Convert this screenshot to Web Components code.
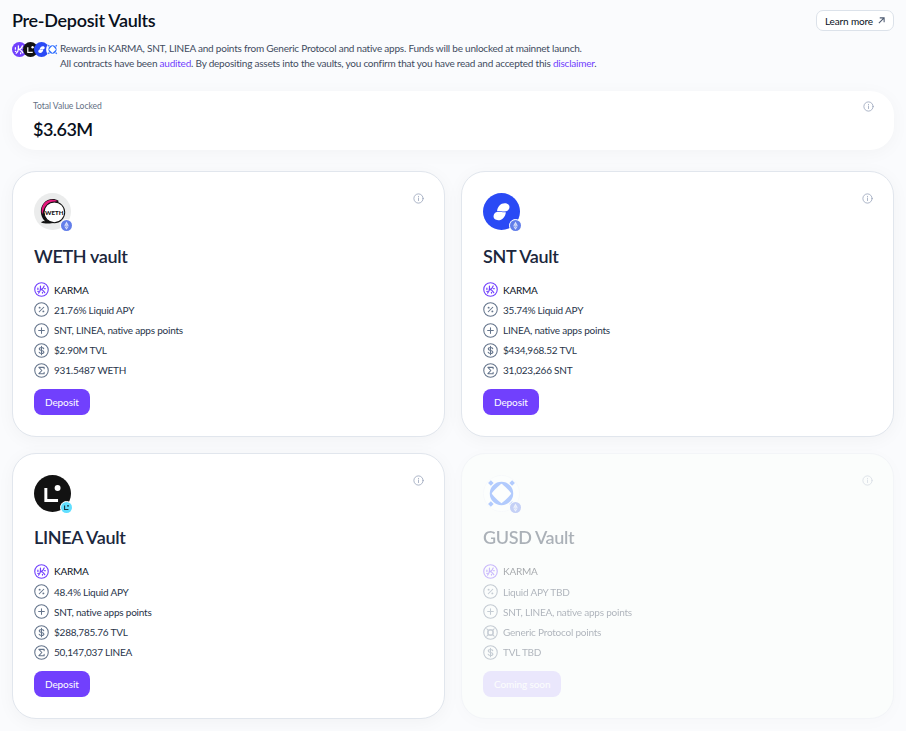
<!DOCTYPE html>
<html lang="en">
<head>
<meta charset="utf-8">
<title>Pre-Deposit Vaults</title>
<style>
    body {
        margin: 0;
        background: #fafbfd;
        color: #1b273d;
        font-family: Lato, "Liberation Sans", sans-serif;
        font-size: 10px;
        letter-spacing: -.22px;
    }
</style>
</head>
<body>
<vaults-page></vaults-page>

<script>
const ICONS = {
    karma: `<g stroke="#7140fd"><circle cx="10" cy="10" r="9" stroke-width="1.5"/><path d="M8.6 5.300v3.500c0 2.700-.9 4.500-2.400 5.900M5.200 8v1.900M13.600 5.300c-.6 2.500-1.900 4.100-4.600 4.700 2.900 0 3.900 1.600 5.400 4.300M14.200 8.900h.8M11.300 13.800v.9M5.100 12.400h.7" stroke-width="1.6"/></g>`,
    percent: `<circle cx="10" cy="10" r="9"/><path d="m7 13 6-6"/><circle cx="7.5" cy="7.5" r=".6"/><circle cx="12.5" cy="12.5" r=".6"/>`,
    plus: `<circle cx="10" cy="10" r="9"/><path d="M10 6.2v7.6M6.2 10h7.6"/>`,
    dollar: `<circle cx="10" cy="10" r="9"/><path d="M13 7.6c-.4-1-1.5-1.5-3-1.5-1.8 0-3 .7-3 1.9C7 11 13.2 9 13.2 12c0 1.2-1.3 2-3.2 2-1.7 0-2.9-.6-3.2-1.7M10 4.5v11"/>`,
    sigma: `<circle cx="10" cy="10" r="9"/><path d="M13.5 7.500V5.800h-7l4 4.200-4 4.200h7v-1.700"/>`,
    generic: `<circle cx="10" cy="10" r="9"/><circle cx="10" cy="10" r="3.6"/><path d="M6.7 6.7h6.6v6.6H6.700zM5 5l1.500 1.500M15 5l-1.500 1.500M5 15l1.500-1.500M15 15l-1.500-1.500"/>`,
    info: `<circle cx="10" cy="10" r="8.4"/><path d="M10 9.3v4.500M10 6.100v.8"/>`
};

const TOKENS = {
    karma: `<circle cx="20" cy="20" r="20" fill="#7140fd"/><g fill="none" stroke="#fff" stroke-width="3.2" stroke-linecap="round"><path d="M17 10v8c0 6-2 9-6 12M9 15v4M28 10c-1.500 5-4 9-10 10 6 0 8 3 11 9M30 17h1M23 29v2M9 25h1"/></g>`,
    linea: `<circle cx="20" cy="20" r="20" fill="#121212"/><path d="M12.8 14v13.500H26" fill="none" stroke="#fff" stroke-width="3.2"/><circle cx="25.5" cy="14" r="3.2" fill="#fff"/>`,
    snt: `<circle cx="20" cy="20" r="20" fill="#2a4af5"/><path fill="#fff" d="M15.2 19.700c.5-5 3.800-8.700 8.300-8.700 3 0 5.300 1.700 5.100 4.500-.2 3-2.700 4.700-5.900 4.600-3-.1-4.600-1-7.500-.4zM24.700 20.700c-.5 5-3.800 8.700-8.300 8.700-3 0-5.200-1.700-5-4.500.2-3 2.700-4.700 5.900-4.600 3 .1 4.500 1 7.400.4z"/>`,
    gusd: `<circle cx="20" cy="20" r="19.5" fill="#fff" stroke="#f1f4fa"/><path fill="#3270ff" fill-rule="evenodd" d="M20 7.300a12.700 12.700 0 1 1 0 25.400 12.700 12.700 0 0 1 0-25.400zM20 9.500c-2 1-9.500 8.500-10.500 10.500 1 2 8.500 9.500 10.500 10.500 2-1 9.500-8.500 10.500-10.500-1-2-8.500-9.500-10.500-10.500zM8.500 5.700l3 3-3 3-3-3zM31.500 5.700l3 3-3 3-3-3zM8.500 28.300l3 3-3 3-3-3zM31.500 28.300l3 3-3 3-3-3z"/>`,
    weth: `<circle cx="20" cy="20" r="20" fill="#ebecec"/><path d="M7.500 31.500c2-1.500 4-.5 4-1.500-5-5-5.500-14-1-19 4-4.500 11-6 16-2.500l-4 23c-4 2-11 2.200-15 0z" fill="#111"/><path d="M8.800 23C7 16 10.500 9 17 7.700c3-.7 6-.2 8.500 1L18 11l-7 6z" fill="#e5177b"/><circle cx="22" cy="20.9" r="11.2" fill="#fff" stroke="#111" stroke-width="1.1"/><text x="21.9" y="23.300" text-anchor="middle" font-family="Lato, sans-serif" font-weight="900" font-size="6.8" letter-spacing="0" textLength="20" lengthAdjust="spacingAndGlyphs" fill="#111">WETH</text>`,
    eth: `<circle cx="20" cy="20" r="20" fill="#627eea"/><path d="M20 5v11.500l8.500 4zM20 5l-8.500 15.500 8.500-4zM20 27.500V35l8.500-12.500zM20 35v-7.500l-8.500-5z" fill="#fff" fill-opacity=".75"/><path d="m20 25.500 8.500-5-8.500-4-8.500 4z" fill="#fff" fill-opacity=".6"/>`,
    lineaNet: `<circle cx="20" cy="20" r="20" fill="#61dfff"/><path d="M13 13v14h14" fill="none" stroke="#17343f" stroke-width="4"/><circle cx="25.5" cy="14" r="3.5" fill="#17343f"/>`
};

const VAULTS = [
    {
        name: 'WETH vault', token: 'weth', network: 'eth',
        items: [['karma', 'KARMA'], ['percent', '21.76% Liquid APY'], ['plus', 'SNT, LINEA, native apps points'], ['dollar', '$2.90M TVL'], ['sigma', '931.5487 WETH']]
    },
    {
        name: 'SNT Vault', token: 'snt', network: 'eth',
        items: [['karma', 'KARMA'], ['percent', '35.74% Liquid APY'], ['plus', 'LINEA, native apps points'], ['dollar', '$434,968.52 TVL'], ['sigma', '31,023,266 SNT']]
    },
    {
        name: 'LINEA Vault', token: 'linea', network: 'lineaNet',
        items: [['karma', 'KARMA'], ['percent', '48.4% Liquid APY'], ['plus', 'SNT, native apps points'], ['dollar', '$288,785.76 TVL'], ['sigma', '50,147,037 LINEA']]
    },
    {
        name: 'GUSD Vault', token: 'gusd', network: 'eth', soon: true,
        items: [['karma', 'KARMA'], ['percent', 'Liquid APY TBD'], ['plus', 'SNT, LINEA, native apps points'], ['generic', 'Generic Protocol points'], ['dollar', 'TVL TBD']]
    }
];

class UiIcon extends HTMLElement {
    connectedCallback() {
        this.attachShadow({mode: 'open'}).innerHTML = `
            <style>
                :host { display: block; flex: none; width: 15px; height: 15px; color: #64748b; }
                svg { display: block; width: 100%; height: 100%; }
            </style>
            <svg viewBox="0 0 20 20" fill="none" stroke="currentColor" stroke-width="1.4" stroke-linecap="round" stroke-linejoin="round">${ICONS[this.getAttribute('name')]}</svg>
        `;
    }
}

class TokenLogo extends HTMLElement {
    connectedCallback() {
        this.attachShadow({mode: 'open'}).innerHTML = `
            <style>
                :host { display: block; flex: none; width: 37px; height: 37px; }
                svg { display: block; width: 100%; height: 100%; }
            </style>
            <svg viewBox="0 0 40 40">${TOKENS[this.getAttribute('name')]}</svg>
        `;
    }
}

class TotalValue extends HTMLElement {
    connectedCallback() {
        this.attachShadow({mode: 'open'}).innerHTML = `
            <style>
                :host {
                    display: flex;
                    justify-content: space-between;
                    box-sizing: border-box;
                    height: 59px;
                    padding: 9px 20.5px 0 21px;
                    border-radius: 24px;
                    background: #fff;
                    box-shadow: 0 3px 18px rgba(9, 16, 28, .035);
                }
                .label { font-size: 8.6px; line-height: 12px; letter-spacing: -.05px; color: #647084; }
                .value { margin-top: 6px; font-size: 18px; line-height: 22px; font-weight: 600; letter-spacing: -.55px; color: #09101c; }
                ui-icon { width: 11px; height: 11px; margin-top: 1px; color: #94a0b8; }
            </style>
            <div>
                <div class="label"><slot name="label"></slot></div>
                <div class="value"><slot></slot></div>
            </div>
            <ui-icon name="info"></ui-icon>
        `;
    }
}

class VaultCard extends HTMLElement {
    set vault(vault) {
        this._vault = vault;
        this.render();
    }

    render() {
        const {name, token, network, soon, items} = this._vault;
        const root = this.shadowRoot || this.attachShadow({mode: 'open'});
        this.toggleAttribute('soon', Boolean(soon));

        root.innerHTML = `
            <style>
                :host {
                    display: block;
                    box-sizing: border-box;
                    height: 265.8px;
                    padding: 21px;
                    border: 1px solid #e1e6ed;
                    border-radius: 24px;
                    background: #fff;
                    box-shadow: 0 3px 18px rgba(9, 16, 28, .04);
                }
                :host([soon]) { background: #fbfdfc; border-color: #f3f5f8; box-shadow: 0 3px 18px rgba(9, 16, 28, .02); }
                :host([soon]) .content { opacity: .36; }
                .top { display: flex; justify-content: space-between; }
                .logo { position: relative; }
                .badge {
                    position: absolute;
                    right: -2px;
                    bottom: -2px;
                    width: 11px;
                    height: 11px;
                    border: 1px solid #fff;
                    border-radius: 50%;
                    background: #fff;
                }
                .info { width: 11px; height: 11px; margin-right: -.6px; color: #94a0b8; }
                h2 {
                    margin: 14.6px 0 12px;
                    font-size: 18px;
                    line-height: 23px;
                    font-weight: 600;
                    letter-spacing: -.36px;
                }
                ul { margin: 0; padding: 0; list-style: none; }
                li { display: flex; align-items: center; gap: 5px; height: 20.2px; color: #28344a; }
                li:first-child { color: #09101c; }
                button {
                    display: block;
                    height: 26px;
                    margin: 8.3px 0 0;
                    padding: 0 11px;
                    border: 0;
                    border-radius: 8px;
                    background: #7140fd;
                    color: #fff;
                    font: inherit;
                    letter-spacing: -.1px;
                }
                :host([soon]) .content button { opacity: .32; }
            </style>
            <div class="content">
                <div class="top">
                    <div class="logo">
                        <token-logo name="${token}"></token-logo>
                        <token-logo class="badge" name="${network}"></token-logo>
                    </div>
                    <ui-icon class="info" name="info"></ui-icon>
                </div>
                <h2>${name}</h2>
                <ul>${items.map(([icon, text]) => `<li><ui-icon name="${icon}"></ui-icon><span>${text}</span></li>`).join('')}</ul>
                <button type="button">${soon ? 'Coming soon' : 'Deposit'}</button>
            </div>
        `;
    }
}

class VaultsPage extends HTMLElement {
    connectedCallback() {
        const root = this.attachShadow({mode: 'open'});
        root.innerHTML = `
            <style>
                :host { display: block; box-sizing: border-box; height: 731px; padding: 10px 12px 0; overflow: hidden; }
                header { display: flex; justify-content: space-between; align-items: flex-start; height: 31px; }
                h1 { margin: 0; font-size: 18px; line-height: 20px; font-weight: 600; letter-spacing: -.29px; color: #09101c; }
                .learn {
                    display: flex;
                    align-items: center;
                    gap: 5.4px;
                    box-sizing: border-box;
                    height: 21px;
                    padding: 0 7.6px 0 8px;
                    border: 1px solid #dce2ea;
                    border-radius: 7px;
                    background: #fff;
                    color: #09101c;
                    letter-spacing: -.13px;
                }
                .learn svg { width: 7px; height: 7px; margin-bottom: 1px; }
                .intro { display: flex; height: 50px; }
                .tokens { display: flex; width: 48px; padding-top: 1px; }
                .tokens token-logo { width: 15px; height: 15px; margin-right: -4px; }
                .tokens token-logo:last-child { margin-left: 1px; width: 13px; height: 13px; margin-top: 1px; }
                p { margin: 0; line-height: 15px; color: #3f4b60; }
                a { color: #7140fd; text-decoration: none; }
                .grid { display: grid; grid-template-columns: 1fr 1fr; gap: 16px; margin-top: 21px; }
            </style>
            <header>
                <h1>Pre-Deposit Vaults</h1>
                <a class="learn" href="#"><span>Learn more</span>
                    <svg viewBox="0 0 8 8" fill="none" stroke="#4d5a70" stroke-width="1.2"><path d="m1 7 6-6M2 1h5v5"/></svg>
                </a>
            </header>
            <div class="intro">
                <div class="tokens">
                    <token-logo name="karma"></token-logo>
                    <token-logo name="linea"></token-logo>
                    <token-logo name="snt"></token-logo>
                    <token-logo name="gusd"></token-logo>
                </div>
                <p>Rewards in KARMA, SNT, LINEA and points from Generic Protocol and native apps. Funds will be unlocked at mainnet launch.<br>All contracts have been <a href="#">audited</a>. By depositing assets into the vaults, you confirm that you have read and accepted this <a href="#">disclaimer</a>.</p>
            </div>
            <total-value><span slot="label">Total Value Locked</span>$3.63M</total-value>
            <div class="grid"></div>
        `;

        const grid = root.querySelector('.grid');
        VAULTS.forEach(vault => {
            const card = document.createElement('vault-card');
            card.vault = vault;
            grid.appendChild(card);
        });
    }
}

customElements.define('ui-icon', UiIcon);
customElements.define('token-logo', TokenLogo);
customElements.define('total-value', TotalValue);
customElements.define('vault-card', VaultCard);
customElements.define('vaults-page', VaultsPage);
</script>
</body>
</html>
